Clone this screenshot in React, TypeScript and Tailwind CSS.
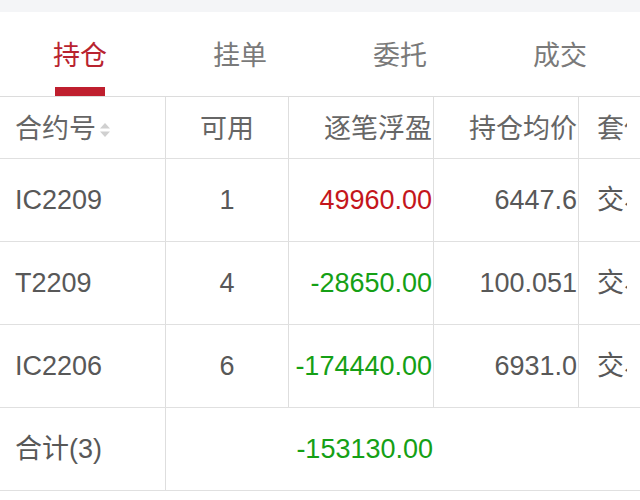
import React from 'react';

const tabs = ['持仓', '挂单', '委托', '成交'];

const rows = [
  { code: 'IC2209', avail: '1', pnl: '49960.00', up: true, price: '6447.6', type: '交易' },
  { code: 'T2209', avail: '4', pnl: '-28650.00', up: false, price: '100.051', type: '交易' },
  { code: 'IC2206', avail: '6', pnl: '-174440.00', up: false, price: '6931.0', type: '交易' },
];

const SortIcon: React.FC = () => (
  <svg width="10" height="14" viewBox="0 0 10 14" className="ml-[4px] mt-[1px]">
    <path d="M5 0 L10 5.5 L0 5.5 Z" fill="#d0d0d0" />
    <path d="M0 8.5 L10 8.5 L5 14 Z" fill="#d0d0d0" />
  </svg>
);

const App: React.FC = () => {
  return (
    <div
      className="w-[640px] h-[500px] bg-white overflow-hidden text-[27px] text-[#585858]"
      style={{ fontFamily: '"Liberation Sans", "Noto Sans CJK SC", sans-serif' }}
    >
      <div className="h-[12px] bg-[#f4f5f7]" />

      {/* tabs */}
      <div className="h-[85px] flex border-b border-[#dcdcdc]">
        {tabs.map((t, i) => (
          <div key={t} className="w-[160px] flex flex-col items-center">
            <div className={`mt-[29px] leading-[30px] ${i === 0 ? 'text-[#b8232f]' : 'text-[#7a7a7a]'}`}>{t}</div>
            <div className="flex-grow" />
            {i === 0 && <div className="w-[50px] h-[9px] bg-[#bf1f2e]" />}
          </div>
        ))}
      </div>

      {/* header */}
      <div className="h-[62px] flex border-b border-[#e0e0e0] text-[#666]">
        <div className="w-[166px] border-r border-[#dedede] flex items-center pl-[15px] pt-[3px]">
          合约号
          <SortIcon />
        </div>
        <div className="w-[123px] border-r border-[#dedede] flex items-center justify-center pt-[3px]">可用</div>
        <div className="w-[145px] border-r border-[#dedede] flex items-center justify-end pr-[1px] pt-[3px]">逐笔浮盈</div>
        <div className="w-[145px] border-r border-[#dedede] flex items-center justify-end pr-[1px] pt-[3px]">持仓均价</div>
        <div className="w-[48px] flex items-center pl-[18px] pt-[3px] overflow-hidden whitespace-nowrap">套保</div>
      </div>

      {rows.map((r) => (
        <div key={r.code} className="h-[83px] flex border-b border-[#e0e0e0]">
          <div className="w-[166px] border-r border-[#dedede] flex items-center pl-[15px]">{r.code}</div>
          <div className="w-[123px] border-r border-[#dedede] flex items-center justify-center">{r.avail}</div>
          <div
            className={`w-[145px] border-r border-[#dedede] flex items-center justify-end pr-[1px] ${
              r.up ? 'text-[#c4161c]' : 'text-[#15a015]'
            }`}
          >
            {r.pnl}
          </div>
          <div className="w-[145px] border-r border-[#dedede] flex items-center justify-end pr-[1px]">{r.price}</div>
          <div className="w-[48px] flex items-center pl-[18px] overflow-hidden whitespace-nowrap">{r.type}</div>
        </div>
      ))}

      {/* total */}
      <div className="h-[83px] flex border-b border-[#e0e0e0]">
        <div className="w-[166px] border-r border-[#dedede] flex items-center pl-[15px]">合计(3)</div>
        <div className="w-[267px] flex items-center justify-end text-[#15a015]">-153130.00</div>
      </div>
    </div>
  );
};

export default App;
